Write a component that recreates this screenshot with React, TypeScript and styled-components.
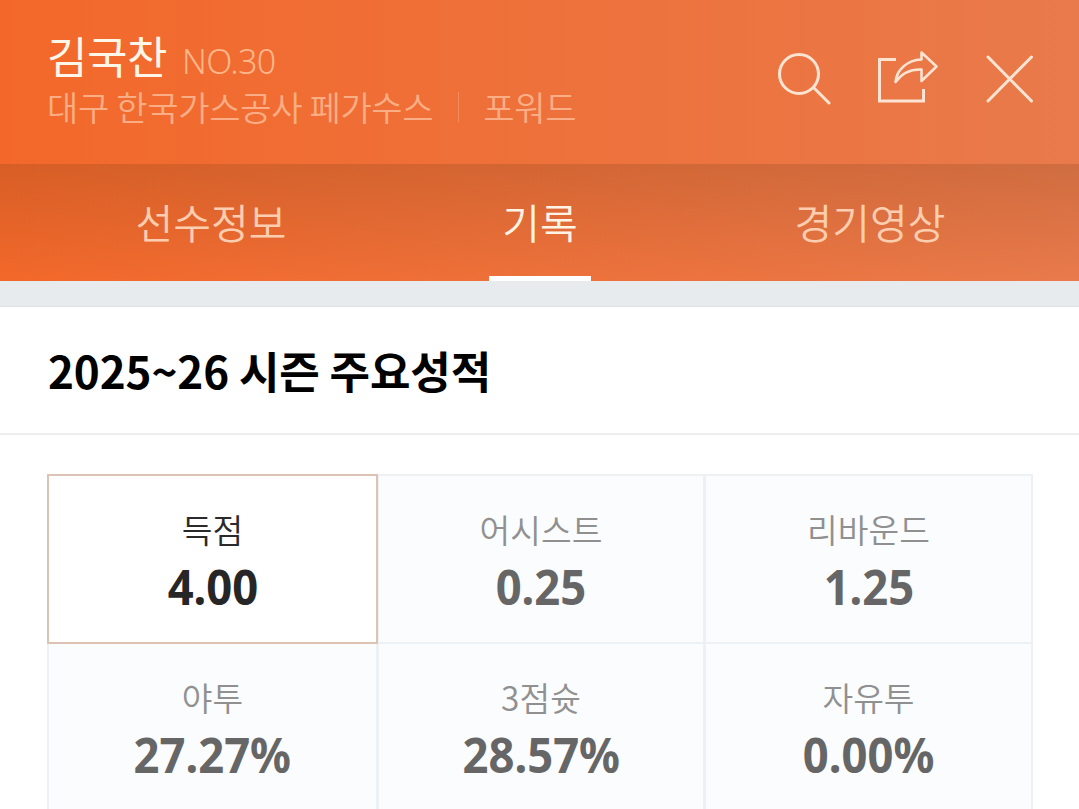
import React from "react";
import styled, { createGlobalStyle } from "styled-components";

const GlobalStyle = createGlobalStyle`
  html, body {
    margin: 0;
    padding: 0;
    height: 809px;
    overflow: hidden;
    background: #fff;
    font-family: "Noto Sans CJK KR", "Noto Sans", sans-serif;
  }
`;

const stats = [
  { label: "득점", value: "4.00", active: true },
  { label: "어시스트", value: "0.25" },
  { label: "리바운드", value: "1.25" },
  { label: "야투", value: "27.27%" },
  { label: "3점슛", value: "28.57%" },
  { label: "자유투", value: "0.00%" },
];

const App = () => {
  return (
    <Page>
      <GlobalStyle />
      <Hero>
        <TopBar>
          <Identity>
            <NameRow>
              <Name>김국찬</Name>
              <Number>NO.30</Number>
            </NameRow>
            <TeamRow>
              <span>대구 한국가스공사 페가수스</span>
              <Divider />
              <span>포워드</span>
            </TeamRow>
          </Identity>
          <Actions>
            <IconButton>
              <svg width="54" height="56" viewBox="0 0 54 56" fill="none">
                <circle cx="22" cy="24" r="19.5" stroke="#fde4d2" strokeWidth="3" />
                <path d="M37 38 L52 53" stroke="#fde4d2" strokeWidth="3" strokeLinecap="round" />
              </svg>
            </IconButton>
            <IconButton>
              <svg width="62" height="56" viewBox="0 0 62 56" fill="none">
                <path d="M19 9.5 H2.5 V51 H46.5 V39" stroke="#fde4d2" strokeWidth="3" />
                <path
                  d="M18.5 32 C19.5 20 30 10 44.5 9.5 V2.5 L59.5 16.5 L44.5 31 V19.5 C33 19 25 23 18.5 32 Z"
                  stroke="#fde4d2"
                  strokeWidth="2.6"
                  strokeLinejoin="round"
                />
              </svg>
            </IconButton>
            <IconButton>
              <svg width="50" height="56" viewBox="0 0 50 56" fill="none">
                <path d="M3 7 L46.5 51 M46.5 7 L3 51" stroke="#fde4d2" strokeWidth="3" strokeLinecap="round" />
              </svg>
            </IconButton>
          </Actions>
        </TopBar>
        <Tabs>
          <Tab>선수정보</Tab>
          <Tab $active>
            기록
            <TabMarker />
          </Tab>
          <Tab>경기영상</Tab>
        </Tabs>
      </Hero>
      <Gap />
      <SectionHead>
        <SectionTitle>2025~26 시즌 주요성적</SectionTitle>
      </SectionHead>
      <GridWrap>
        <StatGrid>
          {stats.map((s) => (
            <StatCell key={s.label} $active={s.active}>
              <StatLabel $active={s.active}>{s.label}</StatLabel>
              <StatValue $active={s.active}>{s.value}</StatValue>
            </StatCell>
          ))}
        </StatGrid>
      </GridWrap>
    </Page>
  );
};

const Page = styled.div`
  width: 1079px;
  height: 809px;
  overflow: hidden;
  background: #fff;
`;

const Hero = styled.div`
  background: linear-gradient(90deg, #f3682a 0%, #e97a4b 100%);
`;

const TopBar = styled.div`
  height: 164px;
  box-sizing: border-box;
  padding: 0 44px 0 47px;
  display: flex;
  justify-content: space-between;
  align-items: flex-start;
`;

const Identity = styled.div`
  padding-top: 25px;
`;

const NameRow = styled.div`
  display: flex;
  align-items: baseline;
  gap: 15px;
  height: 60px;
`;

const Name = styled.div`
  font-size: 44px;
  line-height: 60px;
  color: #fff6ea;
  letter-spacing: -0.5px;
`;

const Number = styled.div`
  font-family: "Noto Sans", sans-serif;
  font-size: 34px;
  line-height: 60px;
  font-weight: 300;
  letter-spacing: -0.6px;
  color: #ffb78c;
`;

const TeamRow = styled.div`
  display: flex;
  align-items: center;
  font-size: 34px;
  line-height: 44px;
  font-weight: 350;
  color: #fbae85;
  letter-spacing: -0.3px;
`;

const Divider = styled.i`
  width: 1px;
  height: 30px;
  margin: 0 24px 0 25px;
  background: #f58a5a;
`;

const Actions = styled.div`
  display: flex;
  align-items: flex-start;
  padding-top: 50px;
  gap: 46px;
`;

const IconButton = styled.div`
  display: flex;
  svg {
    display: block;
  }
`;

const Tabs = styled.div`
  height: 117px;
  box-sizing: border-box;
  padding: 0 44px 0 47px;
  display: grid;
  grid-template-columns: 328px 330px 330px;
  background: linear-gradient(180deg, rgba(90, 50, 20, 0.18) 0%, rgba(90, 50, 20, 0) 100%);
`;

const Tab = styled.div<{ $active?: boolean }>`
  position: relative;
  display: flex;
  align-items: center;
  justify-content: center;
  padding-bottom: 4px;
  box-sizing: border-box;
  font-size: 41px;
  font-weight: 350;
  color: ${({ $active }) => ($active ? "#fff3e6" : "#fdcdb0")};
`;

const TabMarker = styled.span`
  position: absolute;
  left: 50%;
  bottom: 0;
  width: 102px;
  height: 5px;
  margin-left: -51px;
  background: #fff;
`;

const Gap = styled.div`
  height: 25px;
  background: #e7ebee;
  border-bottom: 1px solid #dde1e4;
`;

const SectionHead = styled.div`
  height: 128px;
  box-sizing: border-box;
  display: flex;
  align-items: center;
  padding-left: 48px;
  border-bottom: 2px solid #eeeeee;
`;

const SectionTitle = styled.h2`
  margin: 0;
  font-size: 44px;
  font-weight: 700;
  color: #000;
  letter-spacing: -0.1px;
`;

const GridWrap = styled.div`
  padding: 39px 47px 0;
`;

const StatGrid = styled.div`
  display: grid;
  grid-template-columns: 330px 327px 328px;
  grid-auto-rows: 168px;
`;

const StatCell = styled.div<{ $active?: boolean }>`
  box-sizing: border-box;
  margin: 0 -1px -2px 0;
  display: flex;
  flex-direction: column;
  align-items: center;
  padding-top: 30px;
  background: ${({ $active }) => ($active ? "#fff" : "#fbfcfe")};
  border: 2px solid ${({ $active }) => ($active ? "#dcc3b4" : "#eef1f4")};
  position: relative;
  z-index: ${({ $active }) => ($active ? 1 : 0)};
`;

const StatLabel = styled.div<{ $active?: boolean }>`
  font-size: 33.4px;
  line-height: 46px;
  font-weight: 350;
  color: ${({ $active }) => ($active ? "#2a2a2a" : "#909090")};
`;

const StatValue = styled.div<{ $active?: boolean }>`
  font-family: "Noto Sans", sans-serif;
  font-size: 48px;
  line-height: 62px;
  font-weight: 700;
  margin-top: 4px;
  transform: scaleX(0.945);
  color: ${({ $active }) => ($active ? "#262626" : "#666666")};
`;

export default App;
